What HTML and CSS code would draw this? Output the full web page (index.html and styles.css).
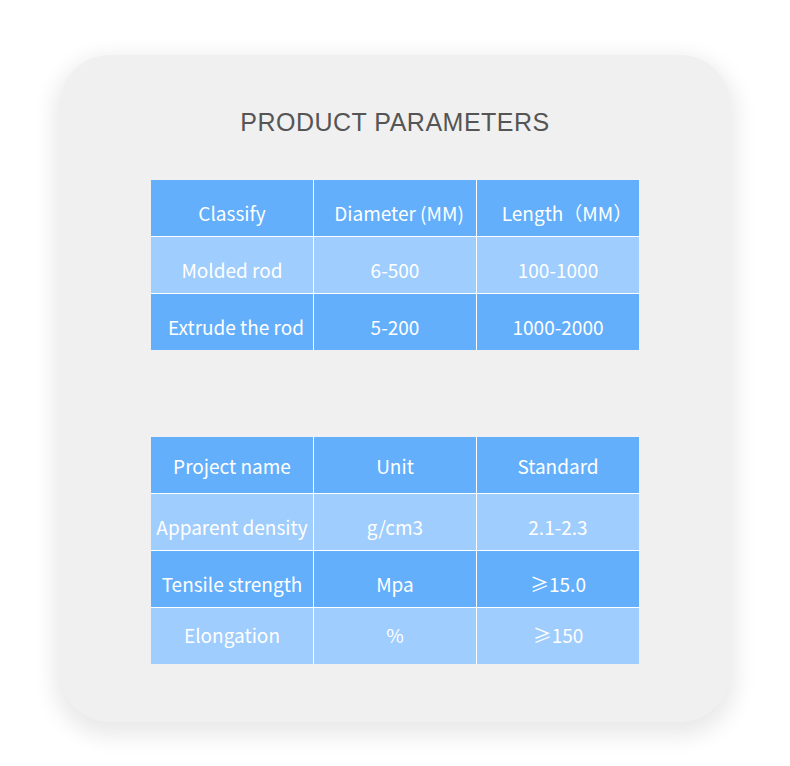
FILE: index.html
```html
<!DOCTYPE html>
<html>
<head>
<meta charset="utf-8">
<link rel="stylesheet" href="styles.css">
</head>
<body>
<div class="card">
  <h1 class="title">PRODUCT PARAMETERS</h1>
  <div class="table">
    <div class="cell dark">Classify</div>
    <div class="cell dark nudge">Diameter (MM)</div>
    <div class="cell dark nudge-wide">Length（MM）</div>
    <div class="cell light">Molded rod</div>
    <div class="cell light">6-500</div>
    <div class="cell light">100-1000</div>
    <div class="cell dark nudge">Extrude the rod</div>
    <div class="cell dark">5-200</div>
    <div class="cell dark">1000-2000</div>
  </div>
  <div class="table second">
    <div class="cell dark head">Project name</div>
    <div class="cell dark head">Unit</div>
    <div class="cell dark head">Standard</div>
    <div class="cell light">Apparent density</div>
    <div class="cell light">g/cm3</div>
    <div class="cell light">2.1-2.3</div>
    <div class="cell dark">Tensile strength</div>
    <div class="cell dark">Mpa</div>
    <div class="cell dark">≥15.0</div>
    <div class="cell light up">Elongation</div>
    <div class="cell light up">%</div>
    <div class="cell light up">≥150</div>
  </div>
</div>
</body>
</html>
```

FILE: styles.css
```css
html, body {
  margin: 0;
  padding: 0;
  background: #ffffff;
}
body {
  width: 790px;
  height: 766px;
  overflow: hidden;
}
.card {
  margin: 55px 0 0 60px;
  width: 670px;
  height: 667px;
  box-sizing: border-box;
  background: #f0f0f0;
  border-radius: 50px;
  box-shadow: 0 8px 22px 6px rgba(0, 0, 0, 0.09);
  padding-top: 53px;
  display: flex;
  flex-direction: column;
  align-items: center;
}
.title {
  margin: 0;
  font-family: "Liberation Sans", Arial, sans-serif;
  font-weight: normal;
  font-size: 25px;
  line-height: 29px;
  color: #555555;
  letter-spacing: 0.5px;
}
.table {
  margin-top: 43px;
  width: 488px;
  display: grid;
  grid-template-columns: 162px 162px 162px;
  grid-auto-rows: 56px;
  gap: 1px;
  background: #ffffff;
}
.table.second {
  margin-top: 87px;
}
.cell {
  display: flex;
  align-items: center;
  justify-content: center;
  padding-top: 8px;
  box-sizing: border-box;
  font-family: "Noto Sans CJK SC", "Noto Sans", sans-serif;
  font-size: 19px;
  color: #ffffff;
  white-space: nowrap;
}
.cell.nudge {
  padding-left: 8px;
}
.cell.nudge-wide {
  padding-left: 18px;
}
.cell.head {
  padding-top: 1px;
}
.cell.up {
  padding-top: 0;
  padding-bottom: 3px;
}
.dark {
  background: #63affc;
}
.light {
  background: #9fcdfd;
}
```
